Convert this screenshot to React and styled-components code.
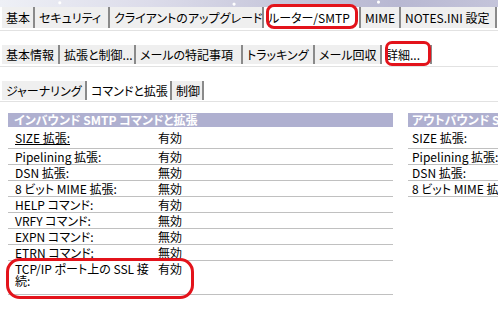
import React from "react"
import styled, { createGlobalStyle } from "styled-components"

const GlobalStyle = createGlobalStyle`
  html, body {
    margin: 0;
    padding: 0;
    background: #ffffff;
    overflow: hidden;
  }
  body {
    font-family: "Noto Sans CJK JP", "Noto Sans", sans-serif;
    font-feature-settings: "palt";
    color: #000;
  }
`

const Page = styled.div`
  position: relative;
  width: 498px;
  height: 313px;
  overflow: hidden;
`

const Banner = styled.div`
  height: 7px;
  background:
    radial-gradient(circle at 12% 40%, #ffffff 0 1px, transparent 2px),
    radial-gradient(circle at 47% 60%, #ffffff 0 1px, transparent 2px),
    radial-gradient(circle at 76% 30%, #ffffff 0 1px, transparent 2px),
    linear-gradient(90deg, #eef0f6 0%, #dcdcea 30%, #c8c8dc 55%, #b8b8d2 80%, #c4c4da 100%);
`

const TabBar = styled.div`
  display: flex;
  margin-top: ${p => p.$top}px;
  padding: 0 0 ${p => p.$gap}px 2px;
  border-bottom: 1px solid #e2e2e2;
`

const Tab = styled.div`
  box-sizing: border-box;
  flex: none;
  width: ${p => p.$w}px;
  height: ${p => p.$h}px;
  display: flex;
  align-items: center;
  padding-left: 4px;
  background: ${p => (p.$active ? "#ffffff" : "#efefef")};
  border-right: 2px solid #8a8a8a;
  font-size: 12px;
  white-space: nowrap;
  overflow: hidden;
`

const Columns = styled.div`
  display: flex;
  gap: 15px;
  margin-top: 11px;
  padding-left: 8px;
`

const Table = styled.div`
  flex: none;
  width: 385px;
`

const Header = styled.div`
  height: 14px;
  background: #afb0d0;
  color: #ffffff;
  font-size: 12px;
  font-weight: bold;
  line-height: 14px;
  padding-left: ${p => p.$pad}px;
  white-space: nowrap;
`

const Row = styled.div`
  display: grid;
  grid-template-columns: 150px 1fr;
  box-sizing: border-box;
  min-height: ${p => p.$h}px;
  padding-top: ${p => p.$top}px;
  border-bottom: 1px solid #c0c0c0;
  font-size: 12px;
  line-height: 12px;
`

const Label = styled.div`
  padding-left: ${p => p.$pad}px;
  padding-right: 4px;
  white-space: ${p => (p.$wrap ? "normal" : "nowrap")};
  text-decoration: ${p => (p.$link ? "underline" : "none")};
`

const Value = styled.div`
  white-space: nowrap;
`

const Mark = styled.div`
  position: absolute;
  left: ${p => p.$x}px;
  top: ${p => p.$y}px;
  width: ${p => p.$w}px;
  height: ${p => p.$h}px;
  box-sizing: border-box;
  border: 3px solid #e3131b;
  border-radius: ${p => p.$r}px;
  pointer-events: none;
`

const topTabs = [
  ["基本", 33],
  ["セキュリティ", 75],
  ["クライアントのアップグレード", 154],
  ["ルーター/SMTP", 97, true],
  ["MIME", 40],
  ["NOTES.INI 設定", 96],
]

const midTabs = [
  ["基本情報", 58],
  ["拡張と制御...", 76],
  ["メールの特記事項", 107],
  ["トラッキング", 72],
  ["メール回収", 67],
  ["詳細...", 50, true],
]

const lowTabs = [
  ["ジャーナリング", 85],
  ["コマンドと拡張", 85, true],
  ["制御", 32],
]

const inbound = [
  ["Pipelining 拡張:", "有効"],
  ["DSN 拡張:", "無効"],
  ["8 ビット MIME 拡張:", "無効"],
  ["HELP コマンド:", "有効"],
  ["VRFY コマンド:", "無効"],
  ["EXPN コマンド:", "無効"],
  ["ETRN コマンド:", "無効"],
]

const outbound = [
  ["Pipelining 拡張:", "有効"],
  ["DSN 拡張:", "無効"],
  ["8 ビット MIME 拡張:", "無効"],
]

const Tabs = ({ items, top, h, gap }) => (
  <TabBar $top={top} $gap={gap}>
    {items.map(([label, w, active]) => (
      <Tab key={label} $w={w} $h={h} $active={active}>{label}</Tab>
    ))}
  </TabBar>
)

const App = () => (
  <Page>
    <GlobalStyle />
    <Banner />
    <Tabs items={topTabs} top={0} h={21} gap={2} />
    <Tabs items={midTabs} top={14} h={19} gap={2} />
    <Tabs items={lowTabs} top={14} h={19} gap={1} />

    <Columns>
      <Table>
        <Header $pad={6}>インバウンド SMTP コマンドと拡張</Header>
        <Row $h={22} $top={5}>
          <Label $pad={7} $link>SIZE 拡張:</Label>
          <Value>有効</Value>
        </Row>
        {inbound.map(([k, v]) => (
          <Row key={k} $h={16} $top={2}>
            <Label $pad={7}>{k}</Label>
            <Value>{v}</Value>
          </Row>
        ))}
        <Row $h={34} $top={2}>
          <Label $pad={7} $wrap>TCP/IP ポート上の SSL 接続:</Label>
          <Value>有効</Value>
        </Row>
      </Table>

      <Table>
        <Header $pad={4}>アウトバウンド SMTP コマンドと拡張</Header>
        <Row $h={22} $top={5}>
          <Label $pad={4}>SIZE 拡張:</Label>
          <Value>有効</Value>
        </Row>
        {outbound.map(([k, v]) => (
          <Row key={k} $h={16} $top={2}>
            <Label $pad={4}>{k}</Label>
            <Value>{v}</Value>
          </Row>
        ))}
      </Table>
    </Columns>

    <Mark $x={266} $y={4} $w={92} $h={25} $r={8} />
    <Mark $x={385} $y={41} $w={46} $h={25} $r={7} />
    <Mark $x={6} $y={258} $w={188} $h={41} $r={14} />
  </Page>
)

export default App
